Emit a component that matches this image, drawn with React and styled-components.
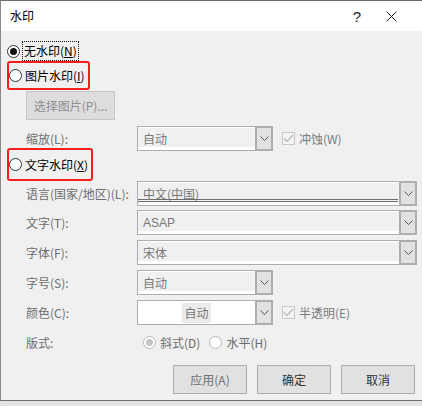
import React from "react";
import styled, { createGlobalStyle } from "styled-components";

const Global = createGlobalStyle`
  body {
    margin: 0;
    background: #e4e4e4;
    font-family: "Noto Sans CJK SC", "Microsoft YaHei", sans-serif;
    font-size: 12px;
  }
`;

const Dialog = styled.div`
  width: 421px;
  height: 399px;
  border-top: 1px solid #6f6f6f;
  border-left: 1px solid #8a8a8a;
  border-bottom: 1px solid #6f6f6f;
  background: #f0f0f0;
  display: flex;
  flex-direction: column;
  position: relative;
  overflow: hidden;
`;

const TitleBar = styled.div`
  height: 30px;
  background: #fff;
  display: flex;
  align-items: center;
  padding-left: 9px;
  color: #000;
`;

const Title = styled.span`
  flex: 1;
  line-height: 1;
`;

const TitleBtn = styled.span`
  width: ${(p) => p.w}px;
  display: flex;
  justify-content: center;
  align-items: center;
  color: #222;
  font-family: "Liberation Sans", sans-serif;
  font-size: 15px;
`;

const Body = styled.div`
  display: flex;
  flex-direction: column;
  padding: 10px 0 0 6px;
`;

const RadioRow = styled.div`
  display: flex;
  align-items: center;
  height: ${(p) => p.h || 20}px;
  gap: 3px;
  color: #000;
`;

const RedBox = styled.div`
  align-self: flex-start;
  width: ${(p) => p.w}px;
  height: ${(p) => p.h}px;
  margin-top: ${(p) => p.mt || 0}px;
  border: 2px solid #f31f1f;
  border-radius: 3px;
  box-sizing: border-box;
  display: flex;
  align-items: center;
  gap: 3px;
  padding-left: 0;
`;

const Radio = styled.span`
  width: 13px;
  height: 13px;
  box-sizing: border-box;
  border-radius: 50%;
  border: 1px solid ${(p) => (p.dim ? "#b8b8b8" : "#333")};
  background: #fff;
  display: flex;
  align-items: center;
  justify-content: center;
  flex-shrink: 0;
  &::after {
    content: "";
    display: ${(p) => (p.on ? "block" : "none")};
    width: 7px;
    height: 7px;
    border-radius: 50%;
    background: ${(p) => (p.dim ? "#c4c4c4" : "#111")};
  }
`;

const Focus = styled.span`
  outline: 1px dotted #111;
  padding: 1px 1px;
  line-height: 16px;
`;

const U = styled.span`
  text-decoration: underline;
  text-underline-offset: 1px;
`;

const StrongLabel = styled.span`
  line-height: 16px;
`;

const PlainButton = styled.div`
  width: ${(p) => p.w}px;
  height: ${(p) => p.h}px;
  box-sizing: border-box;
  border: 1px solid ${(p) => (p.dim ? "#c6c6c6" : "#adadad")};
  background: ${(p) => (p.dim ? "#dddddd" : "#e1e1e1")};
  color: ${(p) => (p.dim ? "#8d8d8d" : p.soft ? "#707070" : "#333")};
  display: flex;
  align-items: center;
  justify-content: center;
`;

const ButtonWrap = styled.div`
  margin: 1px 0 0 19px;
`;

const FieldRow = styled.div`
  display: grid;
  grid-template-columns: 111px auto 1fr;
  align-items: center;
  height: ${(p) => p.h || 25}px;
  margin-top: ${(p) => p.mt || 0}px;
  padding-left: 19px;
  color: #6d6d6d;
`;

const Combo = styled.div`
  width: ${(p) => p.w}px;
  height: ${(p) => p.h || 25}px;
  box-sizing: border-box;
  border: 1px solid #adadad;
  display: flex;
  background: ${(p) => (p.white ? "#fff" : "#f0f0f0")};
  position: relative;
`;

const ComboText = styled.div`
  flex: 1;
  display: flex;
  align-items: center;
  justify-content: ${(p) => (p.center ? "center" : "flex-start")};
  padding-left: ${(p) => (p.center ? 0 : 5)}px;
  color: #777;
  box-shadow: ${(p) =>
    p.white ? "none" : "inset 0 1px 0 #fff, inset 0 -3px 0 #fff"};
  position: relative;
  font-family: ${(p) =>
    p.latin ? '"Liberation Sans", sans-serif' : "inherit"};
`;

const Highlight = styled.span`
  background: #ebebeb;
  padding: 1px 2px;
  line-height: 18px;
`;

const DoubleLine = styled.span`
  position: absolute;
  left: 0;
  right: 1px;
  bottom: 3px;
  height: 3px;
  border-top: 1px solid #6d6d6d;
  border-bottom: 1px solid #6d6d6d;
  box-sizing: border-box;
`;

const DropBtn = styled.div`
  width: 18px;
  margin: -1px -1px -1px 0;
  box-sizing: border-box;
  border: 2px solid #adadad;
  background: #e1e1e1;
  display: flex;
  align-items: center;
  justify-content: center;
`;

const Check = styled.div`
  display: flex;
  align-items: center;
  gap: 4px;
  margin-left: 9px;
  color: #7a7a7a;
`;

const Box = styled.span`
  width: 13px;
  height: 13px;
  box-sizing: border-box;
  border: 1px solid #c8c8c8;
  background: #f4f4f4;
  display: flex;
  align-items: center;
  justify-content: center;
`;

const RadioGroup = styled.div`
  display: flex;
  align-items: center;
  gap: 9px;
  margin-left: 6px;
`;

const RadioItem = styled.div`
  display: flex;
  align-items: center;
  gap: 4px;
  color: #6d6d6d;
`;

const Footer = styled.div`
  display: flex;
  justify-content: flex-end;
  gap: 10px;
  padding-right: 7px;
  margin-top: 11px;
`;

const Chevron = () => (
  <svg width="9" height="5" viewBox="0 0 9 5">
    <path d="M0.5 0.5 L4.5 4.5 L8.5 0.5" fill="none" stroke="#555" strokeWidth="1" />
  </svg>
);

const Tick = () => (
  <svg width="11" height="9" viewBox="0 0 11 9">
    <path d="M1 4.5 L4 7.5 L10 1" fill="none" stroke="#b5b5b5" strokeWidth="1.2" />
  </svg>
);

const Select = ({ w, text, white, center, underline, latin }) => (
  <Combo w={w} white={white}>
    <ComboText white={white} center={center} latin={latin}>
      {center ? <Highlight>{text}</Highlight> : text}
      {underline && <DoubleLine />}
    </ComboText>
    <DropBtn>
      <Chevron />
    </DropBtn>
  </Combo>
);

export default function App() {
  return (
    <>
      <Global />
      <Dialog>
        <TitleBar>
          <Title>水印</Title>
          <TitleBtn w={22}>?</TitleBtn>
          <TitleBtn w={46} style={{ marginRight: 8 }}>
            <svg width="11" height="11" viewBox="0 0 11 11">
              <path d="M0.5 0.5 L10.5 10.5 M10.5 0.5 L0.5 10.5" stroke="#222" strokeWidth="1" />
            </svg>
          </TitleBtn>
        </TitleBar>
        <Body>
          <RadioRow>
            <Radio on />
            <Focus>
              无水印(<U>N</U>)
            </Focus>
          </RadioRow>
          <RedBox w={83} h={29}>
            <Radio />
            <StrongLabel>
              图片水印(<U>I</U>)
            </StrongLabel>
          </RedBox>
          <ButtonWrap>
            <PlainButton w={89} h={29} dim>
              选择图片(P)...
            </PlainButton>
          </ButtonWrap>
          <FieldRow mt={6}>
            <span>缩放(L):</span>
            <Select w={136} text="自动" />
            <Check>
              <Box>
                <Tick />
              </Box>
              冲蚀(W)
            </Check>
          </FieldRow>
          <RedBox w={86} h={33} mt={-3}>
            <Radio />
            <StrongLabel>
              文字水印(<U>X</U>)
            </StrongLabel>
          </RedBox>
          <FieldRow h={24}>
            <span>语言(国家/地区)(L):</span>
            <Select w={280} text="中文(中国)" underline />
          </FieldRow>
          <FieldRow mt={5}>
            <span>文字(T):</span>
            <Select w={280} text="ASAP" latin />
          </FieldRow>
          <FieldRow mt={5}>
            <span>字体(F):</span>
            <Select w={280} text="宋体" />
          </FieldRow>
          <FieldRow mt={5}>
            <span>字号(S):</span>
            <Select w={136} text="自动" />
          </FieldRow>
          <FieldRow mt={5}>
            <span>颜色(C):</span>
            <Select w={136} text="自动" white center />
            <Check>
              <Box>
                <Tick />
              </Box>
              半透明(E)
            </Check>
          </FieldRow>
          <FieldRow h={24} mt={5}>
            <span>版式:</span>
            <RadioGroup>
              <RadioItem>
                <Radio on dim />
                斜式(D)
              </RadioItem>
              <RadioItem>
                <Radio dim />
                水平(H)
              </RadioItem>
            </RadioGroup>
          </FieldRow>
          <Footer>
            <PlainButton w={74} h={29} soft>
              应用(A)
            </PlainButton>
            <PlainButton w={74} h={29}>
              确定
            </PlainButton>
            <PlainButton w={74} h={29}>
              取消
            </PlainButton>
          </Footer>
        </Body>
      </Dialog>
    </>
  );
}
